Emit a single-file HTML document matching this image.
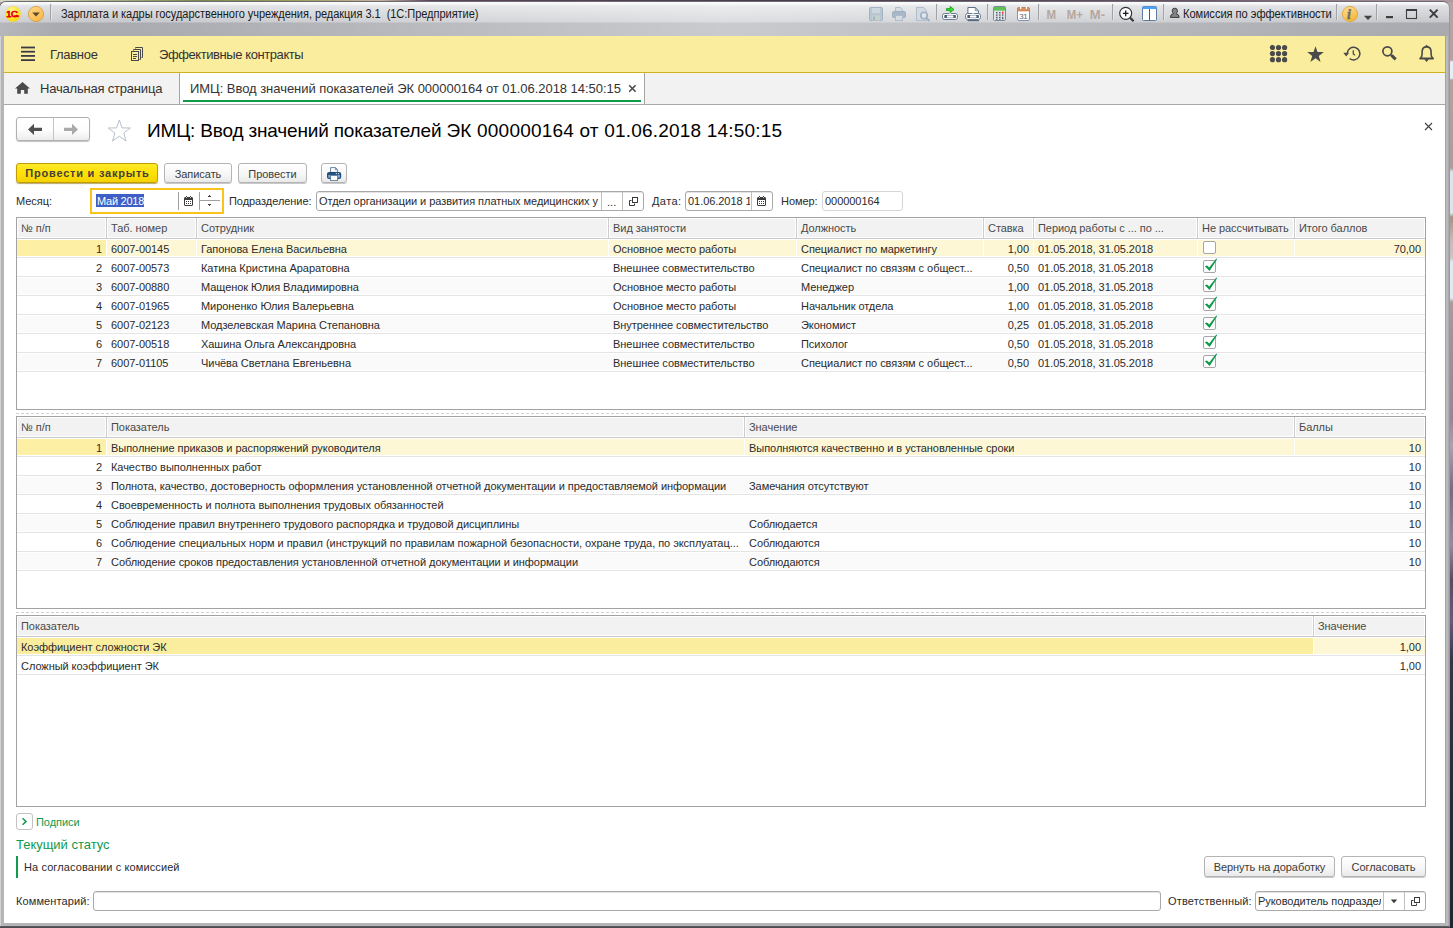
<!DOCTYPE html>
<html lang="ru"><head><meta charset="utf-8"><title>1C</title>
<style>
*{box-sizing:border-box;margin:0;padding:0}
html,body{width:1453px;height:928px;overflow:hidden}
body{position:relative;font-family:"Liberation Sans",sans-serif;font-size:11px;color:#2b2b2b;
 background:linear-gradient(180deg,#b8a4a6 0,#b8a0a2 60px,#e8ecf4 62px,#e8ecf4 78px,#b8a0a0 80px,#b09a9c 168px,#e0e4ea 172px,#e0e4ea 213px,#a39384 217px,#c8b8b8 240px,#d0c2c4 258px,#e4e8f0 262px,#e4e8f0 298px,#b09aa0 302px,#a89098 330px,#9a8494 420px,#b0a0b0 445px,#7a6a80 490px,#9a88a0 545px,#5a4a60 580px,#6a5a78 620px,#3a3448 660px,#2c2a3a 780px,#26242f 928px);}
.a{position:absolute;white-space:pre}
.t{position:absolute;white-space:pre;line-height:13px;height:13px;letter-spacing:-0.05px}
.win{left:-1px;top:1px;width:1451px;height:926px;border-radius:7px 7px 0 0;
 background:#b3b5b8;border:1px solid #6a6c72;border-right-color:#9a9a9e;border-bottom-color:#5a5a5e;box-shadow:inset 1px 0 0 #d2d2d2,inset -1px 0 0 #aaaaad}
.topstrip{left:0;top:0;width:1453px;height:2px;background:linear-gradient(90deg,#d8d8c8 0,#c4c8a0 60px,#7a8a50 200px,#a0a060 300px,#c8b0a0 380px,#5a4458 430px,#4a3a4c 800px,#6a5468 1200px,#a89098 1400px,#b09aa0 1453px)}
.tbar{left:0px;top:2px;width:1449px;height:34px;border-radius:6px 6px 0 0;
 background:linear-gradient(180deg,#fbfbfc 0,#f4f5f6 2px,#dfe0e3 4px,#d6d8db 10px,#c6c8cc 20px,#a9abb0 21px,#a8aaae 34px)}
.tglow{left:0;top:2px;width:1449px;height:34px;border-radius:6px 6px 0 0;background:linear-gradient(90deg,rgba(255,255,255,0.15) 0,rgba(255,255,255,0) 60px,rgba(255,255,255,0.02) 150px,rgba(255,255,255,0.38) 726px,rgba(255,255,255,0.02) 1380px,rgba(255,255,255,0) 1449px)}
.ybar{left:4px;top:36px;width:1441px;height:37px;background:#fbed9e;border-bottom:1px solid #cfb21f}
.tabs{left:4px;top:73px;width:1441px;height:32px;background:#f2f2f2;border-bottom:1px solid #a8a8a8}
.content{left:4px;top:105px;width:1441px;height:818px;background:#fff}
.btn{position:absolute;height:20px;border:1px solid #b4b4b4;border-radius:3px;
 background:linear-gradient(180deg,#ffffff 0,#f6f6f6 60%,#e9e9e9 100%);box-shadow:0 1px 0 #c9c9c9;
 text-align:center;line-height:20px;white-space:pre;color:#3b3b3b;letter-spacing:-0.05px}
.fld{position:absolute;height:20px;border:1px solid #a9a9a9;border-radius:3px;background:#fff;box-shadow:inset 0 1px 0 #e4e4e4}
.tbl{position:absolute;border:1px solid #a2a2a2;background:#fff}
.hd{position:absolute;background:#f2f2f2}
.hl{position:absolute;height:1px;background:#e4e4e4}
.vs{position:absolute;width:1px;background:#cdcdcd}
.row{position:absolute;height:16px}
.ht{color:#4a4a4a}
.sep{position:absolute;width:1px;top:5px;height:17px;background:#a0a2a6;box-shadow:1px 0 0 #e4e5e8}
</style></head>
<body>
<div class="a topstrip"></div>
<div class="a win"></div>
<div class="a tbar"></div>
<div class="a tglow"></div>
<div class="a ybar"></div>
<div class="a tabs"></div>
<div class="a content"></div>
<!-- title bar -->
<svg class="a" style="left:4px;top:5px" width="18" height="18" viewBox="0 0 18 18">
 <defs><radialGradient id="g1c" cx="0.4" cy="0.3" r="0.8"><stop offset="0" stop-color="#fff7a0"/><stop offset="0.6" stop-color="#ffe62a"/><stop offset="1" stop-color="#f5cf00"/></radialGradient></defs>
 <circle cx="9" cy="9" r="7.7" fill="url(#g1c)" stroke="#e8d36a" stroke-width="0.6"/>
 <text x="2.2" y="12.1" font-family="Liberation Sans, sans-serif" font-size="9.4" fill="#e60012" stroke="#e60012" stroke-width="0.75" letter-spacing="-0.3">1С</text>
 <rect x="10" y="10.3" width="4.9" height="1.8" fill="#e60012"/>
</svg>
<svg class="a" style="left:27px;top:5px" width="18" height="18" viewBox="0 0 18 18">
 <defs><linearGradient id="gdd" x1="0" y1="0" x2="0.6" y2="1"><stop offset="0" stop-color="#ffd98a"/><stop offset="1" stop-color="#fdb74a"/></linearGradient></defs>
 <circle cx="9" cy="9" r="7.6" fill="url(#gdd)" stroke="#d0a24a" stroke-width="0.9"/>
 <path d="M5.2 7.6 H12.8 L9 11.6 Z" fill="#5a4a2a"/>
</svg>
<div class="sep" style="left:50px;top:4px;height:16px"></div>
<div class="t" style="left:61px;top:7px;font-size:12px;line-height:14px;height:14px;color:#1a1a1a;transform:scaleX(0.919);transform-origin:0 0">Зарплата и кадры государственного учреждения, редакция 3.1  (1С:Предприятие)</div>

<!-- toolbar icons -->
<svg class="a" style="left:866px;top:4px" width="296" height="20" viewBox="866 4 296 20">
 <!-- save (disabled) -->
 <g>
  <rect x="869.5" y="7.5" width="13" height="13" rx="1" fill="#b9c6d3" stroke="#a3b3c4"/>
  <rect x="872" y="8" width="8" height="5" fill="#ccd6df"/>
  <rect x="872" y="15.5" width="8" height="5" fill="#c6d2cc"/>
  <rect x="873" y="16.5" width="2" height="3.5" fill="#a3b3c4"/>
 </g>
 <!-- printer (disabled) -->
 <g>
  <path d="M895.5 12 V7.5 H900.5 L902.5 9.5 V12 Z" fill="#d5dce4" stroke="#aebccb"/>
  <rect x="892.5" y="11.5" width="13" height="6" rx="1.5" fill="#a9b8c8" stroke="#9fb0c2"/>
  <rect x="895.5" y="15.5" width="7" height="5" fill="#d5dce4" stroke="#aebccb"/>
 </g>
 <!-- preview (disabled) -->
 <g>
  <path d="M916.5 7.5 H923.5 L926.5 10.5 V20.5 H916.5 Z" fill="#d3dae2" stroke="#aebccb"/>
  <circle cx="924" cy="15.5" r="3.2" fill="#dfe5ea" stroke="#9fb0c2" stroke-width="1.6"/>
  <path d="M926.3 18 L929.5 21" stroke="#9fb0c2" stroke-width="2"/>
 </g>
 <rect x="936" y="4" width="1" height="16" fill="#a0a2a6"/><rect x="937" y="4" width="1" height="16" fill="#e4e5e8"/>
 <!-- link with arrow -->
 <g>
  <path d="M946.4 8.6 H950.2 V6.4 L954 9.5 L950.2 12.6 V10.5 H946.4 Z" fill="#2ce62c" stroke="#1c9416" stroke-width="0.8" stroke-linejoin="round"/>
  <rect x="942.5" y="13.5" width="15" height="6" rx="2.2" fill="#fff" stroke="#6b7b92"/>
  <rect x="944.3" y="15.1" width="11.6" height="2.9" rx="0.6" fill="#4f5f76"/>
  <rect x="947.3" y="14.9" width="5.8" height="3.3" fill="#9aa6b8"/>
  <rect x="947" y="15.7" width="6.4" height="1.7" fill="#fff"/>
  <rect x="949.4" y="13" width="1.4" height="1.2" fill="#dfe4ea"/>
 </g>
 <!-- doc with link -->
 <g>
  <path d="M967.9 15 V7.5 H975.2 L978.4 10.7 V15 Z" fill="#fff" stroke="#5f6f86"/>
  <path d="M975.2 7.7 V10.7 H978.2 Z" fill="#d5dde8" stroke="#5f6f86" stroke-width="0.6"/>
  <rect x="965.5" y="13.5" width="15" height="6" rx="2.2" fill="#fff" stroke="#6b7b92"/>
  <rect x="967.3" y="15.1" width="11.6" height="2.9" rx="0.6" fill="#4f5f76"/>
  <rect x="970.3" y="14.9" width="5.8" height="3.3" fill="#9aa6b8"/>
  <rect x="970" y="15.7" width="6.4" height="1.7" fill="#fff"/>
  <rect x="972.4" y="13" width="1.4" height="1.2" fill="#dfe4ea"/>
  <path d="M967.5 20.6 H979" stroke="#5a6a80" stroke-width="1.2"/>
 </g>
 <rect x="987" y="4" width="1" height="16" fill="#a0a2a6"/><rect x="988" y="4" width="1" height="16" fill="#e4e5e8"/>
 <!-- calculator -->
 <g>
  <rect x="993.5" y="6.5" width="12" height="14" rx="1.2" fill="#dfe4e8" stroke="#7d8c9a"/>
  <rect x="994" y="7" width="11" height="3.6" fill="#5fc257"/>
  <g fill="#5a6672"><rect x="996" y="12" width="1.6" height="1.4"/><rect x="999" y="12" width="1.6" height="1.4"/>
  <rect x="996" y="14.4" width="1.6" height="1.4"/><rect x="999" y="14.4" width="1.6" height="1.4"/><rect x="1002" y="14.4" width="1.4" height="1.4"/>
  <rect x="996" y="16.8" width="1.6" height="1.4"/><rect x="999" y="16.8" width="1.6" height="1.4"/><rect x="1002" y="16.8" width="1.4" height="2.6"/>
  <rect x="996" y="18.8" width="1.6" height="1"/><rect x="999" y="18.8" width="1.6" height="1"/></g>
  <rect x="1002" y="11.6" width="1.4" height="2.2" fill="#e8382e"/>
 </g>
 <!-- calendar -->
 <g>
  <rect x="1017.5" y="7.5" width="12" height="13" rx="1.5" fill="#fff" stroke="#7f93ab"/>
  <path d="M1017.5 11 V9 Q1017.5 7.5 1019 7.5 H1028 Q1029.5 7.5 1029.5 9 V11 Z" fill="#d89060" stroke="#c47f52" stroke-width="0.6"/>
  <rect x="1020" y="6" width="1.3" height="3" fill="#fff"/><rect x="1025.8" y="6" width="1.3" height="3" fill="#fff"/>
  <text x="1019.2" y="19" font-family="Liberation Sans, sans-serif" font-size="8" fill="#5a6570" letter-spacing="-0.3">31</text>
 </g>
 <rect x="1038" y="4" width="1" height="16" fill="#a0a2a6"/><rect x="1039" y="4" width="1" height="16" fill="#e4e5e8"/>
 <g font-family="Liberation Sans, sans-serif" font-weight="bold" font-size="13" fill="#b5a79d">
  <text x="1046.6" y="18.6" textLength="9.6" lengthAdjust="spacingAndGlyphs">M</text>
  <text x="1066.8" y="18.6" textLength="16.2" lengthAdjust="spacingAndGlyphs">M+</text>
  <text x="1089.8" y="18.6" textLength="15.2" lengthAdjust="spacingAndGlyphs">M-</text>
 </g>
 <rect x="1112" y="4" width="1" height="16" fill="#a0a2a6"/><rect x="1113" y="4" width="1" height="16" fill="#e4e5e8"/>
 <!-- zoom -->
 <g>
  <path d="M1130 17.6 L1133.6 21.2" stroke="#3a3a3a" stroke-width="2.2"/>
  <circle cx="1125.7" cy="13.3" r="6" fill="#fff" stroke="#333" stroke-width="1.15"/>
  <path d="M1122.9 13.4 H1128.5 M1125.7 10.6 V16.2" stroke="#1a1a1a" stroke-width="1.3"/>
 </g>
 <!-- panels -->
 <g>
  <rect x="1142.5" y="6.5" width="14" height="14" rx="1" fill="#fff" stroke="#5f7da0"/>
  <path d="M1142.5 9 V7.5 Q1142.5 6.5 1143.5 6.5 H1155.5 Q1156.5 6.5 1156.5 7.5 V9 Z" fill="#4aa3f5"/>
  <path d="M1149.5 9 V20.5" stroke="#4a5a6a" stroke-width="1"/>
 </g>
</svg>
<div class="sep" style="left:1163px;top:4px;height:16px"></div>
<svg class="a" style="left:1169px;top:7px" width="12" height="12" viewBox="0 0 12 12">
 <path d="M1.4 10.4 Q1.4 7.4 4.4 6.6 Q3.2 5.4 3.2 3.7 Q3.2 1.2 5.8 1.2 Q8.4 1.2 8.4 3.7 Q8.4 5.4 7.2 6.6 Q10.2 7.4 10.2 10.4 Z" fill="#858585" stroke="#3a3a3a" stroke-width="1"/>
</svg>
<div class="t" style="left:1183px;top:7px;font-size:12px;line-height:14px;height:14px;color:#1a1a1a;transform:scaleX(0.9275);transform-origin:0 0">Комиссия по эффективности</div>
<div class="sep" style="left:1336px;top:4px;height:16px"></div>
<svg class="a" style="left:1341px;top:5px" width="18" height="18" viewBox="0 0 18 18">
 <defs><linearGradient id="gi" x1="0" y1="0" x2="0.5" y2="1"><stop offset="0" stop-color="#ffe09a"/><stop offset="1" stop-color="#f7b83c"/></linearGradient></defs>
 <circle cx="9" cy="9" r="7.6" fill="url(#gi)" stroke="#dca637" stroke-width="0.9"/>
 <text x="5.9" y="13.6" font-family="Liberation Serif, serif" font-weight="bold" font-style="italic" font-size="14" fill="#6c6c6c" stroke="#6c6c6c" stroke-width="0.5">i</text>
</svg>
<svg class="a" style="left:1363px;top:15px" width="10" height="6" viewBox="0 0 10 6"><path d="M0.8 0.8 H9.2 L5 5 Z" fill="#454545"/></svg>
<div class="sep" style="left:1376px;top:4px;height:16px"></div>
<svg class="a" style="left:1383px;top:7px" width="58" height="14" viewBox="1383 7 58 14">
 <rect x="1386" y="16" width="7" height="2.2" fill="#3e3e3e"/>
 <rect x="1406.5" y="10" width="10" height="8.5" fill="none" stroke="#3e3e3e" stroke-width="1.1"/>
 <rect x="1406" y="9" width="11" height="2" fill="#3e3e3e"/>
 <path d="M1429.8 9.6 L1437.6 17.6 M1437.6 9.6 L1429.8 17.6" stroke="#3e3e3e" stroke-width="2"/>
</svg>

<!-- section bar -->
<svg class="a" style="left:20px;top:45px" width="16" height="18" viewBox="20 45 16 18">
 <g fill="#3b3b44"><rect x="21" y="46.6" width="14" height="1.8"/><rect x="21" y="50.8" width="14" height="1.8"/><rect x="21" y="55" width="14" height="1.8"/><rect x="21" y="59.2" width="14" height="1.8"/></g>
</svg>
<div class="t" style="left:50px;top:47px;font-size:13px;line-height:15px;height:15px;color:#333;letter-spacing:-0.3px">Главное</div>
<svg class="a" style="left:130px;top:46px" width="14" height="16" viewBox="130 46 14 16">
 <g fill="none" stroke="#4a4a4a" stroke-width="1">
  <path d="M135.5 48.5 V47.5 H142.5 V57.5 H141.5"/>
  <path d="M133.5 50.5 V49.5 H140.5 V59.5 H139.5"/>
  <rect x="131.5" y="51.5" width="7" height="9" fill="#fbed9e"/>
  <path d="M133 54.5 H137 M133 56.5 H137 M133 58.5 H136"/>
 </g>
</svg>
<div class="t" style="left:159px;top:47px;font-size:13px;line-height:15px;height:15px;color:#333;letter-spacing:-0.42px">Эффективные контракты</div>
<svg class="a" style="left:1266px;top:42px" width="172" height="24" viewBox="1266 42 172 24">
 <g fill="#4a4a4a">
  <circle cx="1272.4" cy="47.5" r="2.6"/><circle cx="1278.5" cy="47.5" r="2.6"/><circle cx="1284.6" cy="47.5" r="2.6"/>
  <circle cx="1272.4" cy="53.6" r="2.6"/><circle cx="1278.5" cy="53.6" r="2.6"/><circle cx="1284.6" cy="53.6" r="2.6"/>
  <circle cx="1272.4" cy="59.7" r="2.6"/><circle cx="1278.5" cy="59.7" r="2.6"/><circle cx="1284.6" cy="59.7" r="2.6"/>
  <path d="M1315.5 46.2 L1317.5 52 L1323.8 52.1 L1318.8 55.9 L1320.6 61.9 L1315.5 58.3 L1310.4 61.9 L1312.2 55.9 L1307.2 52.1 L1313.5 52 Z"/>
 </g>
 <!-- history -->
 <g fill="none" stroke="#4a4a4a" stroke-width="1.5">
  <path d="M1347.3 53.2 A6.3 6.3 0 1 1 1349.6 58.5"/>
  <path d="M1353.3 50.3 V53.9 L1355 55.2" stroke-width="1.3"/>
 </g>
 <path d="M1343.3 52.7 H1349.2 L1346.2 56.4 Z" fill="#4a4a4a"/>
 <!-- search -->
 <circle cx="1387.4" cy="51.3" r="4.5" fill="none" stroke="#4a4a4a" stroke-width="1.7"/>
 <path d="M1390.4 54.4 L1392 56" stroke="#4a4a4a" stroke-width="1.6"/>
 <path d="M1391.6 55.4 L1395.7 59.4" stroke="#4a4a4a" stroke-width="3"/>
 <!-- bell -->
 <g fill="none" stroke="#4a4a4a" stroke-width="1.6" stroke-linecap="round">
  <path d="M1420.2 58.5 H1433" stroke-width="1.9"/>
  <path d="M1420.6 58 Q1422.1 56.8 1422.1 54 V52 Q1422.1 46.9 1426.6 46.9 Q1431.1 46.9 1431.1 52 V54 Q1431.1 56.8 1432.6 58"/>
 </g>
 <path d="M1425.5 46.6 L1426.6 44.9 L1427.7 46.6 Z M1424.8 59.6 H1428.4 L1426.6 61.6 Z" fill="#4a4a4a" stroke="#4a4a4a" stroke-width="0.7"/>
</svg>

<!-- tabs -->
<svg class="a" style="left:14px;top:81px" width="17" height="14" viewBox="14 81 17 14">
 <path d="M22.5 82 L30 88.6 H27.8 V93.8 H24.2 V90 H20.8 V93.8 H17.2 V88.6 H15 Z" fill="#4a4a4a"/>
</svg>
<div class="t" style="left:40px;top:81px;font-size:13px;line-height:15px;height:15px;color:#333;letter-spacing:-0.2px">Начальная страница</div>
<div class="a" style="left:179px;top:73px;width:1px;height:31px;background:#a4a4a4"></div>
<div class="a" style="left:180px;top:73px;width:464px;height:31px;background:#fff"></div>
<div class="a" style="left:644px;top:73px;width:1px;height:31px;background:#a4a4a4"></div>
<div class="a" style="left:183px;top:100px;width:458px;height:2px;background:#109a4c"></div>
<div class="t" style="left:190px;top:81px;font-size:13px;line-height:15px;height:15px;color:#333;letter-spacing:-0.04px">ИМЦ: Ввод значений показателей ЭК 000000164 от 01.06.2018 14:50:15</div>
<svg class="a" style="left:628px;top:84px" width="9" height="9" viewBox="0 0 9 9"><path d="M1.2 1.3 L7.6 7.7 M7.6 1.3 L1.2 7.7" stroke="#4a4a4a" stroke-width="1.6"/></svg>

<!-- form header -->
<div class="a" style="left:16px;top:117px;width:74px;height:24px;border:1px solid #b0b0b0;border-radius:3px;background:linear-gradient(180deg,#fff 0,#fdfdfd 55%,#ececec 100%);box-shadow:0 1px 1px #c4c4c4"></div>
<div class="a" style="left:53px;top:118px;width:1px;height:22px;background:#c4c4c4"></div>
<svg class="a" style="left:26px;top:122px" width="54" height="15" viewBox="26 122 54 15">
 <path d="M28 129.4 L34 123.8 V127.8 H42 V131 H34 V135 Z" fill="#4f4f4f"/>
 <path d="M78 129.4 L72 123.8 V127.8 H64 V131 H72 V135 Z" fill="#a9a9a9"/>
</svg>
<svg class="a" style="left:106px;top:117px" width="26" height="26" viewBox="106 117 26 26">
 <path d="M119.3 120 L122 127.9 L130.4 128 L123.7 133 L126.1 141 L119.3 136.2 L112.5 141 L114.9 133 L108.2 128 L116.6 127.9 Z" fill="#fff" stroke="#b7c0c9" stroke-width="1"/>
</svg>
<div class="t" style="left:147px;top:120px;font-size:19px;line-height:22px;height:22px;color:#000;letter-spacing:-0.17px">ИМЦ: Ввод значений показателей <span style="letter-spacing:0.2px">ЭК 000000164 от 01.06.2018 14:50:15</span></div>
<svg class="a" style="left:1423px;top:121px" width="11" height="11" viewBox="0 0 11 11"><path d="M2 2 L9 9 M9 2 L2 9" stroke="#404040" stroke-width="1.1"/></svg>

<div class="btn" style="left:16px;top:163px;width:142px;height:20px;border-color:#bf9c08;background:linear-gradient(180deg,#ffea2a 0,#ffe106 50%,#f4d200 100%);box-shadow:0 1px 1px #b9a86a;color:#45403a;font-weight:bold;font-size:11px;line-height:18px;letter-spacing:0.78px;text-indent:1px">Провести и закрыть</div>
<div class="btn" style="left:164px;top:163px;width:68px">Записать</div>
<div class="btn" style="left:238px;top:163px;width:69px">Провести</div>
<div class="btn" style="left:321px;top:163px;width:26px"></div>
<svg class="a" style="left:326px;top:166px" width="16" height="16" viewBox="326 166 16 16">
 <path d="M330.6 172.4 V167.6 H335.6 L337.6 169.6 V172.4 Z" fill="#fff" stroke="#5a7896" stroke-width="0.9"/>
 <path d="M335.4 167.8 V169.8 H337.4" fill="#9fb4c8" stroke="#5a7896" stroke-width="0.7"/>
 <rect x="327.6" y="172.6" width="13" height="5.8" rx="1.5" fill="#7ea6d6" stroke="#1f4e79" stroke-width="1.2"/>
 <rect x="328" y="173" width="12.2" height="1.9" fill="#1f4e79"/>
 <rect x="335.8" y="173.2" width="1.1" height="0.9" fill="#fff"/><rect x="337.9" y="173.2" width="1.1" height="0.9" fill="#fff"/>
 <rect x="330.6" y="175.4" width="7" height="5.2" fill="#fff" stroke="#5a7896" stroke-width="0.9"/>
</svg>

<div class="t" style="left:16px;top:195px">Месяц:</div>
<div class="a" style="left:90px;top:188px;width:134px;height:26px;border:2px solid #f9c31c;border-radius:0;background:#fff"></div>
<div class="a" style="left:96px;top:194px;width:48px;height:13px;background:#3d5fc6"></div>
<div class="t" style="left:97px;top:195px;color:#fff;letter-spacing:-0.25px">Май 2018</div>
<div class="a" style="left:178px;top:192px;width:1px;height:18px;background:#a0a0a0"></div>
<div class="a" style="left:199px;top:192px;width:1px;height:18px;background:#a0a0a0"></div>
<svg class="a cal" style="left:184px;top:196px" width="9" height="10" viewBox="0 0 9 10" shape-rendering="crispEdges">
 <rect x="0" y="1" width="9" height="9" fill="#3c3c3c"/>
 <rect x="1" y="4" width="7" height="5" fill="#fff"/>
 <rect x="2" y="0" width="1" height="1" fill="#3c3c3c"/><rect x="6" y="0" width="1" height="1" fill="#3c3c3c"/>
 <rect x="2" y="1" width="1" height="1" fill="#d0d0d0"/><rect x="6" y="1" width="1" height="1" fill="#d0d0d0"/>
 <rect x="0" y="1" width="1" height="1" fill="#9a9a9a"/><rect x="8" y="1" width="1" height="1" fill="#9a9a9a"/>
 <rect x="0" y="9" width="1" height="1" fill="#9a9a9a"/><rect x="8" y="9" width="1" height="1" fill="#9a9a9a"/>
 <g fill="#3c3c3c"><rect x="2" y="5" width="1" height="1"/><rect x="4" y="5" width="1" height="1"/><rect x="6" y="5" width="1" height="1"/>
 <rect x="2" y="7" width="1" height="1"/><rect x="4" y="7" width="1" height="1"/><rect x="6" y="7" width="1" height="1"/></g>
</svg>
<div class="a" style="left:200px;top:200px;width:20px;height:1px;background:#a0a0a0"></div>
<svg class="a" style="left:208px;top:195px" width="3" height="11" viewBox="0 0 3 11" shape-rendering="crispEdges"><g fill="#444"><rect x="1" y="0" width="1" height="1"/><rect x="0" y="1" width="3" height="1"/><rect x="0" y="9" width="3" height="1"/><rect x="1" y="10" width="1" height="1"/></g></svg>

<div class="t" style="left:229px;top:195px">Подразделение:</div>
<div class="fld" style="left:316px;top:191px;width:328px"></div>
<div class="t" style="left:319px;top:195px;width:280px;overflow:hidden">Отдел организации и развития платных медицинских у</div>
<div class="a" style="left:601px;top:192px;width:1px;height:18px;background:#c0c0c0"></div>
<div class="a" style="left:622px;top:192px;width:1px;height:18px;background:#c0c0c0"></div>
<div class="t" style="left:607px;top:196px;letter-spacing:0.05px">...</div>
<svg class="a opn" style="left:628px;top:196px" width="10" height="10" viewBox="0 0 10 10">
 <rect x="4.5" y="1.5" width="5" height="5" fill="none" stroke="#3a3a3a"/><path d="M3.5 4.5 H1.5 V9.5 H6.5 V7.5" fill="none" stroke="#3a3a3a"/>
</svg>
<div class="t" style="left:652px;top:195px;letter-spacing:0.4px">Дата:</div>
<div class="fld" style="left:685px;top:191px;width:88px"></div>
<div class="t" style="left:688px;top:195px;width:62px;overflow:hidden">01.06.2018 14:50:15</div>
<div class="a" style="left:751px;top:192px;width:1px;height:18px;background:#c0c0c0"></div>
<svg class="a cal" style="left:757px;top:196px" width="9" height="10" viewBox="0 0 9 10" shape-rendering="crispEdges">
 <rect x="0" y="1" width="9" height="9" fill="#3c3c3c"/>
 <rect x="1" y="4" width="7" height="5" fill="#fff"/>
 <rect x="2" y="0" width="1" height="1" fill="#3c3c3c"/><rect x="6" y="0" width="1" height="1" fill="#3c3c3c"/>
 <rect x="2" y="1" width="1" height="1" fill="#d0d0d0"/><rect x="6" y="1" width="1" height="1" fill="#d0d0d0"/>
 <rect x="0" y="1" width="1" height="1" fill="#9a9a9a"/><rect x="8" y="1" width="1" height="1" fill="#9a9a9a"/>
 <rect x="0" y="9" width="1" height="1" fill="#9a9a9a"/><rect x="8" y="9" width="1" height="1" fill="#9a9a9a"/>
 <g fill="#3c3c3c"><rect x="2" y="5" width="1" height="1"/><rect x="4" y="5" width="1" height="1"/><rect x="6" y="5" width="1" height="1"/>
 <rect x="2" y="7" width="1" height="1"/><rect x="4" y="7" width="1" height="1"/><rect x="6" y="7" width="1" height="1"/></g>
</svg>
<div class="t" style="left:781px;top:195px">Номер:</div>
<div class="fld" style="left:822px;top:191px;width:81px;border-color:#d6d6d6;box-shadow:none"></div>
<div class="t" style="left:825px;top:195px">000000164</div>

<div class="tbl" style="left:16px;top:217px;width:1410px;height:193px"></div>
<div class="hd" style="left:18px;top:219px;width:87px;height:18px"></div>
<div class="hd" style="left:108px;top:219px;width:87px;height:18px"></div>
<div class="hd" style="left:198px;top:219px;width:409px;height:18px"></div>
<div class="hd" style="left:610px;top:219px;width:185px;height:18px"></div>
<div class="hd" style="left:798px;top:219px;width:184px;height:18px"></div>
<div class="hd" style="left:985px;top:219px;width:47px;height:18px"></div>
<div class="hd" style="left:1035px;top:219px;width:161px;height:18px"></div>
<div class="hd" style="left:1199px;top:219px;width:94px;height:18px"></div>
<div class="hd" style="left:1296px;top:219px;width:128px;height:18px"></div>
<div class="vs" style="left:106px;top:218px;height:20px"></div>
<div class="vs" style="left:196px;top:218px;height:20px"></div>
<div class="vs" style="left:608px;top:218px;height:20px"></div>
<div class="vs" style="left:796px;top:218px;height:20px"></div>
<div class="vs" style="left:983px;top:218px;height:20px"></div>
<div class="vs" style="left:1033px;top:218px;height:20px"></div>
<div class="vs" style="left:1197px;top:218px;height:20px"></div>
<div class="vs" style="left:1294px;top:218px;height:20px"></div>
<div class="hl" style="left:17px;top:238px;width:1408px;background:#c9c9c9"></div>
<div class="t ht" style="left:21px;top:222px;">№ п/п</div>
<div class="t ht" style="left:111px;top:222px;">Таб. номер</div>
<div class="t ht" style="left:201px;top:222px;">Сотрудник</div>
<div class="t ht" style="left:613px;top:222px;">Вид занятости</div>
<div class="t ht" style="left:801px;top:222px;">Должность</div>
<div class="t ht" style="left:988px;top:222px;">Ставка</div>
<div class="t ht" style="left:1038px;top:222px;">Период работы с ... по ...</div>
<div class="t ht" style="left:1202px;top:222px;">Не рассчитывать</div>
<div class="t ht" style="left:1299px;top:222px;">Итого баллов</div>
<div class="row" style="left:17px;top:240px;width:89px;background:#fdf0a4"></div>
<div class="row" style="left:107px;top:240px;width:89px;background:#fdf7d6"></div>
<div class="row" style="left:197px;top:240px;width:411px;background:#fdf7d6"></div>
<div class="row" style="left:609px;top:240px;width:187px;background:#fdf7d6"></div>
<div class="row" style="left:797px;top:240px;width:186px;background:#fdf7d6"></div>
<div class="row" style="left:984px;top:240px;width:49px;background:#fdf7d6"></div>
<div class="row" style="left:1034px;top:240px;width:163px;background:#fdf7d6"></div>
<div class="row" style="left:1198px;top:240px;width:96px;background:#fdf7d6"></div>
<div class="row" style="left:1295px;top:240px;width:130px;background:#fdf7d6"></div>
<div class="hl" style="left:17px;top:257px;width:1408px"></div>
<div class="t " style="right:1351px;top:243px;">1</div>
<div class="t " style="left:111px;top:243px;">6007-00145</div>
<div class="t " style="left:201px;top:243px;">Гапонова Елена Васильевна</div>
<div class="t " style="left:613px;top:243px;">Основное место работы</div>
<div class="t " style="left:801px;top:243px;">Специалист по маркетингу</div>
<div class="t " style="right:424px;top:243px;">1,00</div>
<div class="t " style="left:1038px;top:243px;">01.05.2018, 31.05.2018</div>
<div class="a" style="left:1203px;top:241px;width:13px;height:13px;border:1px solid #a6a6a6;border-radius:2px;background:#fff"></div>
<div class="t " style="right:32px;top:243px;">70,00</div>
<div class="hl" style="left:17px;top:276px;width:1408px"></div>
<div class="t " style="right:1351px;top:262px;">2</div>
<div class="t " style="left:111px;top:262px;">6007-00573</div>
<div class="t " style="left:201px;top:262px;">Катина Кристина Араратовна</div>
<div class="t " style="left:613px;top:262px;">Внешнее совместительство</div>
<div class="t " style="left:801px;top:262px;">Специалист по связям с общест...</div>
<div class="t " style="right:424px;top:262px;">0,50</div>
<div class="t " style="left:1038px;top:262px;">01.05.2018, 31.05.2018</div>
<div class="a" style="left:1203px;top:260px;width:13px;height:13px;border:1px solid #a6a6a6;border-radius:2px;background:#fff"></div>
<svg class="a" style="left:1203px;top:257px" width="16" height="17" viewBox="0 0 16 17"><path d="M1.8 9.3 L4 8.4 L6.2 10.6 L13.3 1.6 L14.1 2.3 L6.6 14 Z" fill="#0b9a49"/></svg>
<div class="row" style="left:17px;top:278px;width:1408px;background:#fafafa"></div>
<div class="hl" style="left:17px;top:295px;width:1408px"></div>
<div class="t " style="right:1351px;top:281px;">3</div>
<div class="t " style="left:111px;top:281px;">6007-00880</div>
<div class="t " style="left:201px;top:281px;">Мащенок Юлия Владимировна</div>
<div class="t " style="left:613px;top:281px;">Основное место работы</div>
<div class="t " style="left:801px;top:281px;">Менеджер</div>
<div class="t " style="right:424px;top:281px;">1,00</div>
<div class="t " style="left:1038px;top:281px;">01.05.2018, 31.05.2018</div>
<div class="a" style="left:1203px;top:279px;width:13px;height:13px;border:1px solid #a6a6a6;border-radius:2px;background:#fff"></div>
<svg class="a" style="left:1203px;top:276px" width="16" height="17" viewBox="0 0 16 17"><path d="M1.8 9.3 L4 8.4 L6.2 10.6 L13.3 1.6 L14.1 2.3 L6.6 14 Z" fill="#0b9a49"/></svg>
<div class="hl" style="left:17px;top:314px;width:1408px"></div>
<div class="t " style="right:1351px;top:300px;">4</div>
<div class="t " style="left:111px;top:300px;">6007-01965</div>
<div class="t " style="left:201px;top:300px;">Мироненко Юлия Валерьевна</div>
<div class="t " style="left:613px;top:300px;">Основное место работы</div>
<div class="t " style="left:801px;top:300px;">Начальник отдела</div>
<div class="t " style="right:424px;top:300px;">1,00</div>
<div class="t " style="left:1038px;top:300px;">01.05.2018, 31.05.2018</div>
<div class="a" style="left:1203px;top:298px;width:13px;height:13px;border:1px solid #a6a6a6;border-radius:2px;background:#fff"></div>
<svg class="a" style="left:1203px;top:295px" width="16" height="17" viewBox="0 0 16 17"><path d="M1.8 9.3 L4 8.4 L6.2 10.6 L13.3 1.6 L14.1 2.3 L6.6 14 Z" fill="#0b9a49"/></svg>
<div class="row" style="left:17px;top:316px;width:1408px;background:#fafafa"></div>
<div class="hl" style="left:17px;top:333px;width:1408px"></div>
<div class="t " style="right:1351px;top:319px;">5</div>
<div class="t " style="left:111px;top:319px;">6007-02123</div>
<div class="t " style="left:201px;top:319px;">Модзелевская Марина Степановна</div>
<div class="t " style="left:613px;top:319px;">Внутреннее совместительство</div>
<div class="t " style="left:801px;top:319px;">Экономист</div>
<div class="t " style="right:424px;top:319px;">0,25</div>
<div class="t " style="left:1038px;top:319px;">01.05.2018, 31.05.2018</div>
<div class="a" style="left:1203px;top:317px;width:13px;height:13px;border:1px solid #a6a6a6;border-radius:2px;background:#fff"></div>
<svg class="a" style="left:1203px;top:314px" width="16" height="17" viewBox="0 0 16 17"><path d="M1.8 9.3 L4 8.4 L6.2 10.6 L13.3 1.6 L14.1 2.3 L6.6 14 Z" fill="#0b9a49"/></svg>
<div class="hl" style="left:17px;top:352px;width:1408px"></div>
<div class="t " style="right:1351px;top:338px;">6</div>
<div class="t " style="left:111px;top:338px;">6007-00518</div>
<div class="t " style="left:201px;top:338px;">Хашина Ольга Александровна</div>
<div class="t " style="left:613px;top:338px;">Внешнее совместительство</div>
<div class="t " style="left:801px;top:338px;">Психолог</div>
<div class="t " style="right:424px;top:338px;">0,50</div>
<div class="t " style="left:1038px;top:338px;">01.05.2018, 31.05.2018</div>
<div class="a" style="left:1203px;top:336px;width:13px;height:13px;border:1px solid #a6a6a6;border-radius:2px;background:#fff"></div>
<svg class="a" style="left:1203px;top:333px" width="16" height="17" viewBox="0 0 16 17"><path d="M1.8 9.3 L4 8.4 L6.2 10.6 L13.3 1.6 L14.1 2.3 L6.6 14 Z" fill="#0b9a49"/></svg>
<div class="row" style="left:17px;top:354px;width:1408px;background:#fafafa"></div>
<div class="hl" style="left:17px;top:371px;width:1408px"></div>
<div class="t " style="right:1351px;top:357px;">7</div>
<div class="t " style="left:111px;top:357px;">6007-01105</div>
<div class="t " style="left:201px;top:357px;">Чичёва Светлана Евгеньевна</div>
<div class="t " style="left:613px;top:357px;">Внешнее совместительство</div>
<div class="t " style="left:801px;top:357px;">Специалист по связям с общест...</div>
<div class="t " style="right:424px;top:357px;">0,50</div>
<div class="t " style="left:1038px;top:357px;">01.05.2018, 31.05.2018</div>
<div class="a" style="left:1203px;top:355px;width:13px;height:13px;border:1px solid #a6a6a6;border-radius:2px;background:#fff"></div>
<svg class="a" style="left:1203px;top:352px" width="16" height="17" viewBox="0 0 16 17"><path d="M1.8 9.3 L4 8.4 L6.2 10.6 L13.3 1.6 L14.1 2.3 L6.6 14 Z" fill="#0b9a49"/></svg>
<div class="a" style="left:16px;top:413px;width:1408px;height:0;border-top:1px dashed #d0d0d0"></div>
<div class="tbl" style="left:16px;top:416px;width:1410px;height:193px"></div>
<div class="hd" style="left:18px;top:418px;width:87px;height:18px"></div>
<div class="hd" style="left:108px;top:418px;width:635px;height:18px"></div>
<div class="hd" style="left:746px;top:418px;width:547px;height:18px"></div>
<div class="hd" style="left:1296px;top:418px;width:128px;height:18px"></div>
<div class="vs" style="left:106px;top:417px;height:20px"></div>
<div class="vs" style="left:744px;top:417px;height:20px"></div>
<div class="vs" style="left:1294px;top:417px;height:20px"></div>
<div class="hl" style="left:17px;top:437px;width:1408px;background:#c9c9c9"></div>
<div class="t ht" style="left:21px;top:421px;">№ п/п</div>
<div class="t ht" style="left:111px;top:421px;">Показатель</div>
<div class="t ht" style="left:749px;top:421px;">Значение</div>
<div class="t ht" style="left:1299px;top:421px;">Баллы</div>
<div class="row" style="left:17px;top:439px;width:89px;background:#fdf0a4"></div>
<div class="row" style="left:107px;top:439px;width:637px;background:#fdf7d6"></div>
<div class="row" style="left:745px;top:439px;width:549px;background:#fdf7d6"></div>
<div class="row" style="left:1295px;top:439px;width:130px;background:#fdf7d6"></div>
<div class="hl" style="left:17px;top:456px;width:1408px"></div>
<div class="t " style="right:1351px;top:442px;">1</div>
<div class="t " style="left:111px;top:442px;">Выполнение приказов и распоряжений руководителя</div>
<div class="t " style="left:749px;top:442px;">Выполняются качественно и в установленные сроки</div>
<div class="t " style="right:32px;top:442px;">10</div>
<div class="hl" style="left:17px;top:475px;width:1408px"></div>
<div class="t " style="right:1351px;top:461px;">2</div>
<div class="t " style="left:111px;top:461px;">Качество выполненных работ</div>
<div class="t " style="right:32px;top:461px;">10</div>
<div class="row" style="left:17px;top:477px;width:1408px;background:#fafafa"></div>
<div class="hl" style="left:17px;top:494px;width:1408px"></div>
<div class="t " style="right:1351px;top:480px;">3</div>
<div class="t " style="left:111px;top:480px;">Полнота, качество, достоверность оформления установленной отчетной документации и предоставляемой информации</div>
<div class="t " style="left:749px;top:480px;">Замечания отсутствуют</div>
<div class="t " style="right:32px;top:480px;">10</div>
<div class="hl" style="left:17px;top:513px;width:1408px"></div>
<div class="t " style="right:1351px;top:499px;">4</div>
<div class="t " style="left:111px;top:499px;">Своевременность и полнота выполнения трудовых обязанностей</div>
<div class="t " style="right:32px;top:499px;">10</div>
<div class="row" style="left:17px;top:515px;width:1408px;background:#fafafa"></div>
<div class="hl" style="left:17px;top:532px;width:1408px"></div>
<div class="t " style="right:1351px;top:518px;">5</div>
<div class="t " style="left:111px;top:518px;">Соблюдение правил внутреннего трудового распорядка и трудовой дисциплины</div>
<div class="t " style="left:749px;top:518px;">Соблюдается</div>
<div class="t " style="right:32px;top:518px;">10</div>
<div class="hl" style="left:17px;top:551px;width:1408px"></div>
<div class="t " style="right:1351px;top:537px;">6</div>
<div class="t " style="left:111px;top:537px;">Соблюдение специальных норм и правил (инструкций по правилам пожарной безопасности, охране труда, по эксплуатац...</div>
<div class="t " style="left:749px;top:537px;">Соблюдаются</div>
<div class="t " style="right:32px;top:537px;">10</div>
<div class="row" style="left:17px;top:553px;width:1408px;background:#fafafa"></div>
<div class="hl" style="left:17px;top:570px;width:1408px"></div>
<div class="t " style="right:1351px;top:556px;">7</div>
<div class="t " style="left:111px;top:556px;">Соблюдение сроков предоставления установленной отчетной документации и информации</div>
<div class="t " style="left:749px;top:556px;">Соблюдаются</div>
<div class="t " style="right:32px;top:556px;">10</div>
<div class="a" style="left:16px;top:612px;width:1408px;height:0;border-top:1px dashed #d0d0d0"></div>
<div class="tbl" style="left:16px;top:615px;width:1410px;height:192px"></div>
<div class="hd" style="left:18px;top:617px;width:1294px;height:18px"></div>
<div class="hd" style="left:1315px;top:617px;width:109px;height:18px"></div>
<div class="vs" style="left:1313px;top:616px;height:20px"></div>
<div class="hl" style="left:17px;top:636px;width:1408px;background:#c9c9c9"></div>
<div class="t ht" style="left:21px;top:620px;">Показатель</div>
<div class="t ht" style="left:1318px;top:620px;">Значение</div>
<div class="row" style="left:17px;top:638px;width:1296px;background:#fbed9e"></div>
<div class="row" style="left:1314px;top:638px;width:111px;background:#fdf7d6"></div>
<div class="hl" style="left:17px;top:655px;width:1408px"></div>
<div class="t " style="left:21px;top:641px;">Коэффициент сложности ЭК</div>
<div class="t " style="right:32px;top:641px;">1,00</div>
<div class="hl" style="left:17px;top:674px;width:1408px"></div>
<div class="t " style="left:21px;top:660px;">Сложный коэффициент ЭК</div>
<div class="t " style="right:32px;top:660px;">1,00</div>
<!-- bottom -->
<div class="a" style="left:16px;top:813px;width:17px;height:17px;border:1px solid #c2c2c2;border-radius:3px;background:#fff"></div>
<svg class="a" style="left:21px;top:817px" width="7" height="9" viewBox="0 0 7 9"><path d="M1.6 1.2 L5 4.5 L1.6 7.8" fill="none" stroke="#109a4c" stroke-width="1.6"/></svg>
<div class="t" style="left:36px;top:816px;color:#109a4c">Подписи</div>
<div class="t" style="left:16px;top:837px;font-size:13px;line-height:15px;height:15px;color:#109a4c;letter-spacing:-0.02px">Текущий статус</div>
<div class="a" style="left:16px;top:856px;width:2px;height:22px;background:#109a4c"></div>
<div class="t" style="left:24px;top:861px;letter-spacing:0.1px">На согласовании с комиссией</div>
<div class="btn" style="left:1204px;top:856px;width:131px;height:21px;line-height:20px">Вернуть на доработку</div>
<div class="btn" style="left:1341px;top:856px;width:85px;height:21px;line-height:20px">Согласовать</div>
<div class="t" style="left:16px;top:895px;letter-spacing:0.1px">Комментарий:</div>
<div class="fld" style="left:93px;top:891px;width:1068px"></div>
<div class="t" style="left:1168px;top:895px;letter-spacing:0.15px">Ответственный:</div>
<div class="fld" style="left:1255px;top:891px;width:171px"></div>
<div class="t" style="left:1258px;top:895px;width:123px;overflow:hidden">Руководитель подразделения</div>
<div class="a" style="left:1383px;top:892px;width:1px;height:18px;background:#c0c0c0"></div>
<div class="a" style="left:1404px;top:892px;width:1px;height:18px;background:#c0c0c0"></div>
<svg class="a" style="left:1390px;top:899px" width="8" height="5" viewBox="0 0 8 5"><path d="M0.8 0.6 H7.2 L4 4.2 Z" fill="#3a3a3a"/></svg>
<svg class="a opn" style="left:1410px;top:896px" width="10" height="10" viewBox="0 0 10 10">
 <rect x="4.5" y="1.5" width="5" height="5" fill="none" stroke="#3a3a3a"/><path d="M3.5 4.5 H1.5 V9.5 H6.5 V7.5" fill="none" stroke="#3a3a3a"/>
</svg>

<div class="a" style="left:1445px;top:36px;width:1px;height:887px;background:#a2a3a6"></div>
<div class="a" style="left:1446px;top:36px;width:2px;height:890px;background:#b9babc"></div>
<div class="a" style="left:0;top:927px;width:1450px;height:1px;background:#4c4c50"></div>
</body></html>
